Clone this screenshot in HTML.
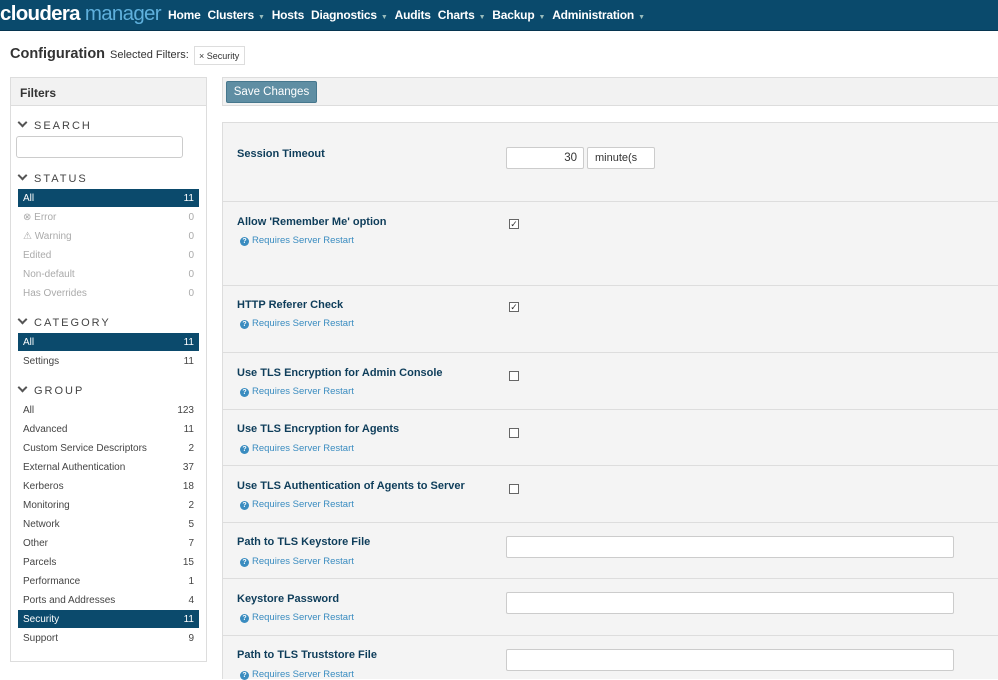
<!DOCTYPE html>
<html><head><meta charset="utf-8"><style>
*{box-sizing:border-box;margin:0;padding:0}
body{width:998px;height:679px;overflow:hidden;background:#fff;font-family:"Liberation Sans",sans-serif;font-size:11px;color:#333;position:relative}
.nav{position:absolute;left:0;top:0;width:998px;height:31px;background:#0a4a6c;border-bottom:1px solid #063550}
.logo{position:absolute;left:0;top:2px;font-size:20.5px;font-weight:bold;color:#fff;letter-spacing:-0.7px;white-space:nowrap}
.logo span{color:#5fb0dc;font-weight:normal}
.menu{position:absolute;left:168px;top:8px;color:#fff;font-size:12px;font-weight:bold;white-space:nowrap;letter-spacing:-0.2px}
.menu b{margin-right:7px}
.menu i{font-style:normal;font-size:7px;color:#9bb;margin-left:4px}
.abs{position:absolute}
.side{position:absolute;left:10px;top:77px;width:197px;height:585px;border:1px solid #ddd}
.shead{height:28px;background:#f2f2f2;border-bottom:1px solid #ddd;padding:8px 9px;font-weight:bold;font-size:12px}
.sec{position:absolute;left:6px;font-size:11px;letter-spacing:2px;color:#444}
.sec:before{content:"";display:inline-block;width:5px;height:5px;border-right:2px solid #555;border-bottom:2px solid #555;transform:rotate(45deg);margin:0 8px 3px 2px}
.it{position:absolute;left:7px;width:181px;height:18px;padding:4px 5px;font-size:10px;color:#444}
.it span{float:right}
.it.g{color:#aaa}
.it.s{background:#0b4a6c;color:#fff}
.main{position:absolute;left:222px;top:122px;width:776px;height:557px;background:#f4f4f4;border-left:1px solid #ddd;border-top:1px solid #ddd}
.mhead{position:absolute;left:222px;top:77px;width:776px;height:29px;background:#f2f2f2;border:1px solid #ddd;border-right:0}
.btn{position:absolute;left:3px;top:3px;width:91px;height:22px;background:#5f8ea3;border:1px solid #46778d;border-radius:2px;color:#fff;font-size:11.5px;text-align:center;line-height:20px}
.lbl{position:absolute;left:14px;font-weight:bold;font-size:11px;color:#0e3d5a}
.rq{position:absolute;left:17px;font-size:9.5px;color:#3a8cc0}
.rq:before{content:"?";display:inline-block;width:9px;height:9px;border-radius:50%;background:#3a8cc0;color:#fff;font-size:7px;font-weight:bold;text-align:center;line-height:9px;margin-right:3px}
.sep{position:absolute;left:0;width:776px;height:1px;background:#ddd}
.cb{position:absolute;left:286px;width:10px;height:10px;border:1px solid #666;background:#fff;font-size:9px;line-height:8px;text-align:center}
.inp{position:absolute;left:283px;width:448px;height:22px;border:1px solid #ccc;border-radius:2px;background:#fff}
</style></head><body>
<div class="nav"><div class="logo">cloudera<span> manager</span></div>
<div class="menu"><b>Home</b><b>Clusters<i>▼</i></b><b>Hosts</b><b>Diagnostics<i>▼</i></b><b>Audits</b><b>Charts<i>▼</i></b><b>Backup<i>▼</i></b><b>Administration<i>▼</i></b></div></div>
<div class="abs" style="left:10px;top:46px;font-size:14.5px;font-weight:bold">Configuration</div>
<div class="abs" style="left:110px;top:49px;font-size:11px">Selected Filters:</div>
<div class="abs" style="left:194px;top:46px;width:51px;height:19px;border:1px solid #ddd;font-size:9px;padding:4px 4px;white-space:nowrap">× Security</div>
<div class="side"><div class="shead">Filters</div>
<div class="sec" style="top:41px">SEARCH</div>
<div class="abs" style="left:5px;top:58px;width:167px;height:22px;border:1px solid #ccc;border-radius:3px"></div>
<div class="sec" style="top:94px">STATUS</div>
<div class="it s" style="top:111px">All<span>11</span></div>
<div class="it g" style="top:130px">⊗ Error<span>0</span></div>
<div class="it g" style="top:149px">⚠ Warning<span>0</span></div>
<div class="it g" style="top:168px">Edited<span>0</span></div>
<div class="it g" style="top:187px">Non-default<span>0</span></div>
<div class="it g" style="top:206px">Has Overrides<span>0</span></div>
<div class="sec" style="top:238px">CATEGORY</div>
<div class="it s" style="top:255px">All<span>11</span></div>
<div class="it" style="top:274px">Settings<span>11</span></div>
<div class="sec" style="top:306px">GROUP</div>
<div class="it" style="top:323px">All<span>123</span></div>
<div class="it" style="top:342px">Advanced<span>11</span></div>
<div class="it" style="top:361px">Custom Service Descriptors<span>2</span></div>
<div class="it" style="top:380px">External Authentication<span>37</span></div>
<div class="it" style="top:399px">Kerberos<span>18</span></div>
<div class="it" style="top:418px">Monitoring<span>2</span></div>
<div class="it" style="top:437px">Network<span>5</span></div>
<div class="it" style="top:456px">Other<span>7</span></div>
<div class="it" style="top:475px">Parcels<span>15</span></div>
<div class="it" style="top:494px">Performance<span>1</span></div>
<div class="it" style="top:513px">Ports and Addresses<span>4</span></div>
<div class="it s" style="top:532px">Security<span>11</span></div>
<div class="it" style="top:551px">Support<span>9</span></div>
</div>
<div class="mhead"><div class="btn">Save Changes</div></div>
<div class="main" style="top:122px">
<div style="position:absolute;left:0;top:-123px;width:776px;height:679px">
<div class="lbl" style="top:148px">Session Timeout</div>
<div class="abs" style="left:283px;top:147px;width:78px;height:22px;border:1px solid #ccc;border-radius:2px;background:#fff;text-align:right;padding:4px 6px;font-size:11.5px">30</div>
<div class="abs" style="left:364px;top:147px;width:68px;height:22px;border:1px solid #ccc;border-radius:2px;background:#fff;padding:4px 7px;font-size:11px;white-space:nowrap;overflow:hidden">minute(s</div>
<div class="sep" style="top:201px"></div>
<div class="lbl" style="top:216px">Allow 'Remember Me' option</div><div class="rq" style="top:235px">Requires Server Restart</div><div class="cb" style="top:219px">✓</div>
<div class="sep" style="top:285px"></div>
<div class="lbl" style="top:299px">HTTP Referer Check</div><div class="rq" style="top:318px">Requires Server Restart</div><div class="cb" style="top:302px">✓</div>
<div class="sep" style="top:352px"></div>
<div class="lbl" style="top:367px">Use TLS Encryption for Admin Console</div><div class="rq" style="top:386px">Requires Server Restart</div><div class="cb" style="top:371px"></div>
<div class="sep" style="top:409px"></div>
<div class="lbl" style="top:423px">Use TLS Encryption for Agents</div><div class="rq" style="top:443px">Requires Server Restart</div><div class="cb" style="top:428px"></div>
<div class="sep" style="top:465px"></div>
<div class="lbl" style="top:480px">Use TLS Authentication of Agents to Server</div><div class="rq" style="top:499px">Requires Server Restart</div><div class="cb" style="top:484px"></div>
<div class="sep" style="top:522px"></div>
<div class="lbl" style="top:536px">Path to TLS Keystore File</div><div class="rq" style="top:556px">Requires Server Restart</div><div class="inp" style="top:536px"></div>
<div class="sep" style="top:578px"></div>
<div class="lbl" style="top:593px">Keystore Password</div><div class="rq" style="top:612px">Requires Server Restart</div><div class="inp" style="top:592px"></div>
<div class="sep" style="top:635px"></div>
<div class="lbl" style="top:649px">Path to TLS Truststore File</div><div class="rq" style="top:669px">Requires Server Restart</div><div class="inp" style="top:649px"></div>
</div></div>
</body></html>
